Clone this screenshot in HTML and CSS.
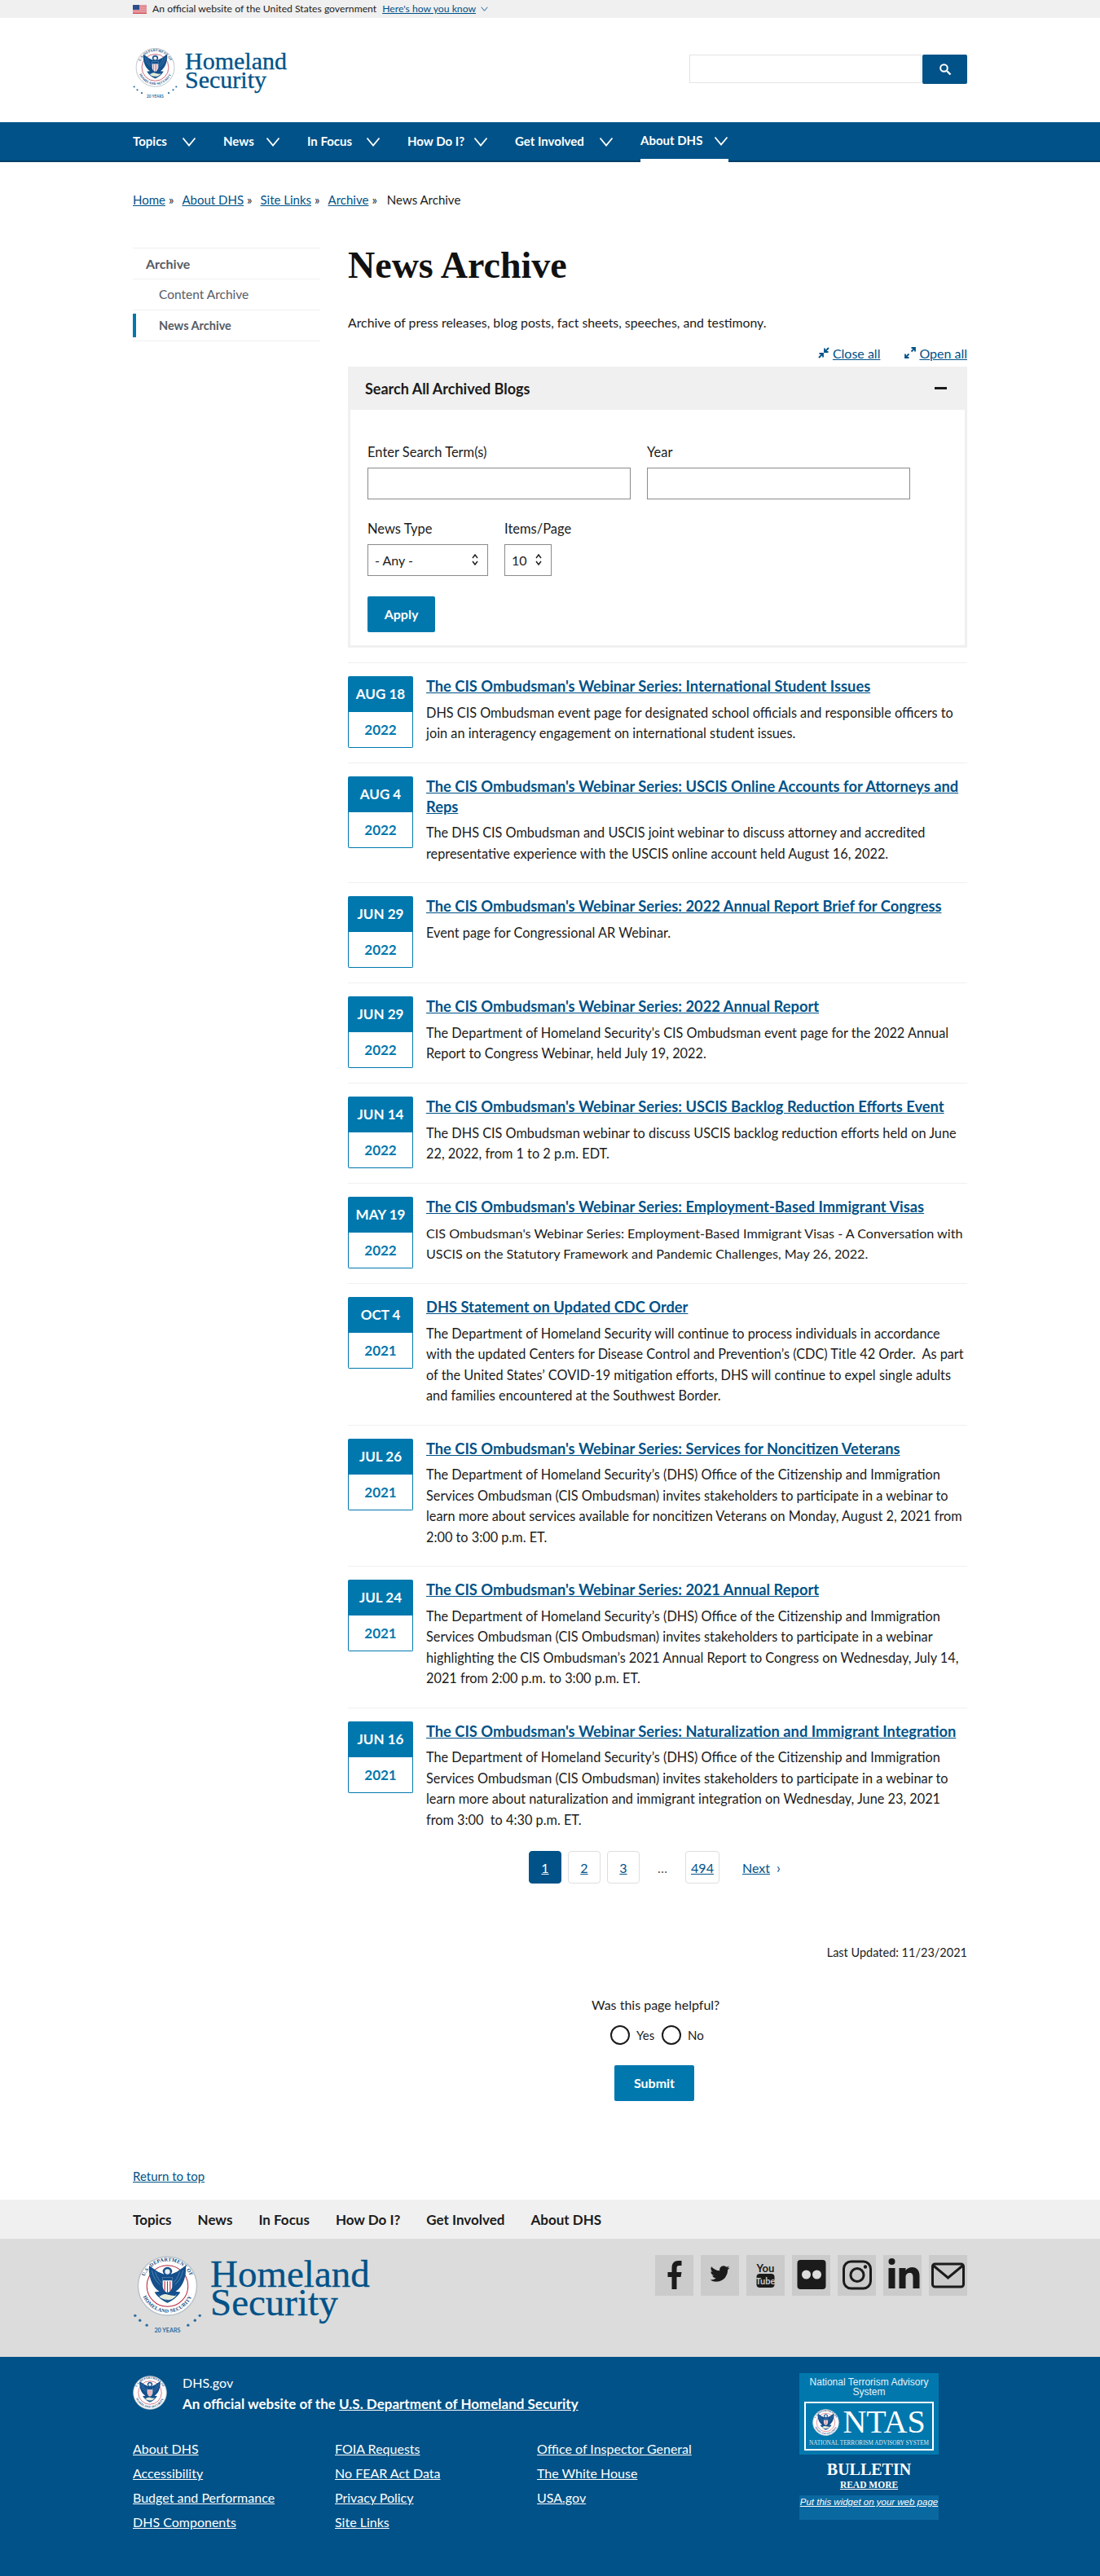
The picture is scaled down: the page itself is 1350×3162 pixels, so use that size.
FILE: index.html
```html
<!DOCTYPE html>
<html lang="en">
<head>
<meta charset="utf-8">
<title>News Archive | Homeland Security</title>
<link rel="stylesheet" href="styles.css">
</head>
<body>
<svg class="defs" width="0" height="0" aria-hidden="true">
  <defs>
    <path id="ring-top" d="M9 50a41 41 0 0 1 82 0"/>
    <path id="ring-bottom" d="M6 50a44 44 0 0 0 88 0"/>
    <symbol id="seal" viewBox="0 0 100 100">
      <circle cx="50" cy="50" r="48.5" fill="#fff" stroke="#b9c2c9" stroke-width="2"/>
      <text class="seal-ring"><textPath href="#ring-top" startOffset="50%" text-anchor="middle">U.S. DEPARTMENT OF</textPath></text>
      <text class="seal-ring"><textPath href="#ring-bottom" startOffset="50%" text-anchor="middle">HOMELAND SECURITY</textPath></text>
      <circle cx="50" cy="50" r="34" fill="#fff" stroke="#b5253d" stroke-width="1.4"/>
      <g transform="translate(50 50) scale(1.12) translate(-50 -50)">
        <path d="M50 22c-4 0-7 3-7 7l2 4-9-4-13-9c-1 13 2 26 11 35l4 3-7 1c4 7 12 13 19 16 7-3 15-9 19-16l-7-1 4-3c9-9 12-22 11-35l-13 9-9 4 2-4c0-4-3-7-7-7z" fill="#14508c"/>
        <path d="M27 27c2 9 6 16 12 21M32 29c2 7 5 12 9 16M73 27c-2 9-6 16-12 21M68 29c-2 7-5 12-9 16M36 62c5 5 9 8 14 10 5-2 9-5 14-10" fill="none" stroke="#5a8dbb" stroke-width="1"/>
        <circle cx="50" cy="29" r="3.800" fill="#e8eef3"/>
        <path d="M43 37h14v13c0 5-3 8-7 10-4-2-7-5-7-10z" fill="#fff"/>
        <path d="M43 37h14v5H43z" fill="#14508c"/>
        <path d="M46 43v14M50 43v17M54 43v14" stroke="#b5253d" stroke-width="1.300"/>
        <path d="M38 66c5-4 9-5 13-3 4 1 8 2 12 1-4 5-9 7-14 6-4 0-8-1-11-4z" fill="#e6ecd9"/>
      </g>
    </symbol>
    <symbol id="seal-years" viewBox="0 0 100 116">
      <use href="#seal" x="6" y="1" width="88" height="88"/>
      <g fill="#2c6ea0">
        <circle cx="3" cy="88" r="2"/><circle cx="97" cy="88" r="2"/>
        <circle cx="10" cy="95" r="2"/><circle cx="90" cy="95" r="2"/>
        <circle cx="20" cy="102" r="2"/><circle cx="80" cy="102" r="2"/>
      </g>
      <text class="seal-years" x="50" y="112" text-anchor="middle">20 YEARS</text>
    </symbol>
    <symbol id="chev" viewBox="0 0 18 12">
      <path d="M1.5 1.5 9 10.5l7.500-9" fill="none" stroke="currentColor" stroke-width="1.800"/>
    </symbol>
    <symbol id="updown" viewBox="0 0 10 16">
      <path d="M2 6l3-4 3 4M2 10l3 4 3-4" fill="none" stroke="#1b1b1b" stroke-width="1.400"/>
    </symbol>
  </defs>
</svg>

<div class="gov">
  <div class="wrap gov-in">
    <svg class="flag" viewBox="0 0 17 11"><rect width="17" height="11" fill="#fff"/><path d="M0 .8h17M0 2.500h17M0 4.200h17M0 5.900h17M0 7.600h17M0 9.300h17M0 10.600h17" stroke="#c8323e" stroke-width=".9"/><rect width="8" height="6" fill="#2d4f8b"/></svg>
    <span>An official website of the United States government</span>
    <a href="#" class="gov-link">Here's how you know</a>
    <svg class="gov-chev" width="9" height="6"><use href="#chev"/></svg>
  </div>
</div>

<header class="wrap head">
  <a href="#" class="logo logo-s">
    <svg class="logo-seal"><use href="#seal-years"/></svg>
    <span class="logo-text">Homeland<br>Security</span>
  </a>
  <form class="search">
    <input class="search-in" type="text" aria-label="Search">
    <button class="search-btn" type="button" aria-label="Search">
      <svg width="16" height="16" viewBox="0 0 16 16"><circle cx="6.500" cy="6.500" r="4.300" fill="none" stroke="#fff" stroke-width="2"/><path d="M10 10l4.500 4.500" stroke="#fff" stroke-width="2.400"/></svg>
    </button>
  </form>
</header>

<nav class="nav">
  <ul class="wrap nav-list">
    <li class="nav-i nav-topics"><a href="#">Topics</a><svg class="nav-chev"><use href="#chev"/></svg></li>
    <li class="nav-i nav-news"><a href="#">News</a><svg class="nav-chev"><use href="#chev"/></svg></li>
    <li class="nav-i nav-focus"><a href="#">In Focus</a><svg class="nav-chev"><use href="#chev"/></svg></li>
    <li class="nav-i nav-how"><a href="#">How Do I?</a><svg class="nav-chev"><use href="#chev"/></svg></li>
    <li class="nav-i nav-inv"><a href="#">Get Involved</a><svg class="nav-chev"><use href="#chev"/></svg></li>
    <li class="nav-i nav-about is-active"><a href="#">About DHS</a><svg class="nav-chev"><use href="#chev"/></svg></li>
  </ul>
</nav>

<div class="wrap crumbs">
  <a href="#">Home</a><span class="sep">»</span>
  <a href="#">About DHS</a><span class="sep">»</span>
  <a href="#">Site Links</a><span class="sep">»</span>
  <a href="#">Archive</a><span class="sep">»</span>
  <span class="crumb-now">News Archive</span>
</div>

<div class="wrap layout">
  <aside class="side">
    <a href="#" class="side-h">Archive</a>
    <a href="#" class="side-l">Content Archive</a>
    <a href="#" class="side-l is-cur">News Archive</a>
  </aside>
  <main class="main">
    <h1 class="title">News Archive</h1>
    <p class="desc">Archive of press releases, blog posts, fact sheets, speeches, and testimony.</p>
    <div class="toggles">
      <svg class="tog-i" viewBox="0 0 14 14"><path d="M13 1 8.500 5.500M8 1.500V6h4.500M1 13l4.500-4.500M6 12.500V8H1.500" fill="none" stroke="#005288" stroke-width="1.800"/></svg><a href="#">Close all</a>
      <svg class="tog-i tog-open" viewBox="0 0 14 14"><path d="M8.500 5.500 13 1M8.500 1H13v4.500M5.500 8.500 1 13M5.500 13H1V8.500" fill="none" stroke="#005288" stroke-width="1.800"/></svg><a href="#">Open all</a>
    </div>
    <section class="acc">
      <div class="acc-h"><h2>Search All Archived Blogs</h2><span class="acc-minus"></span></div>
      <form class="acc-b">
        <div class="row">
          <label class="fld"><span class="lbl">Enter Search Term(s)</span><input class="inp" type="text"></label>
          <label class="fld"><span class="lbl">Year</span><input class="inp" type="text"></label>
        </div>
        <div class="row row-sel">
          <label class="fld-s"><span class="lbl">News Type</span>
            <span class="sel sel-type">- Any -<svg class="sel-i"><use href="#updown"/></svg></span></label>
          <label class="fld-s"><span class="lbl">Items/Page</span>
            <span class="sel sel-num">10<svg class="sel-i"><use href="#updown"/></svg></span></label>
        </div>
        <button class="btn btn-apply" type="button">Apply</button>
      </form>
    </section>

    <ul class="news">
      <li class="item">
        <div class="date"><div class="d-top">AUG 18</div><div class="d-bot">2022</div></div>
        <div class="txt"><h3><a href="#">The CIS Ombudsman's Webinar Series: International Student Issues</a></h3>
        <p>DHS CIS Ombudsman event page for designated school officials and responsible officers to join an interagency engagement on international student issues.</p></div>
      </li>
      <li class="item">
        <div class="date"><div class="d-top">AUG 4</div><div class="d-bot">2022</div></div>
        <div class="txt"><h3><a href="#">The CIS Ombudsman's Webinar Series: USCIS Online Accounts for Attorneys and Reps</a></h3>
        <p>The DHS CIS Ombudsman and USCIS joint webinar to discuss attorney and accredited representative experience with the USCIS online account held August 16, 2022.</p></div>
      </li>
      <li class="item">
        <div class="date"><div class="d-top">JUN 29</div><div class="d-bot">2022</div></div>
        <div class="txt"><h3><a href="#">The CIS Ombudsman's Webinar Series: 2022 Annual Report Brief for Congress</a></h3>
        <p>Event page for Congressional AR Webinar.</p></div>
      </li>
      <li class="item">
        <div class="date"><div class="d-top">JUN 29</div><div class="d-bot">2022</div></div>
        <div class="txt"><h3><a href="#">The CIS Ombudsman's Webinar Series: 2022 Annual Report</a></h3>
        <p>The Department of Homeland Security's CIS Ombudsman event page for the 2022 Annual Report to Congress Webinar, held July 19, 2022.</p></div>
      </li>
      <li class="item">
        <div class="date"><div class="d-top">JUN 14</div><div class="d-bot">2022</div></div>
        <div class="txt"><h3><a href="#">The CIS Ombudsman's Webinar Series: USCIS Backlog Reduction Efforts Event</a></h3>
        <p>The DHS CIS Ombudsman webinar to discuss USCIS backlog reduction efforts held on June 22, 2022, from 1 to 2 p.m. EDT.</p></div>
      </li>
      <li class="item">
        <div class="date"><div class="d-top">MAY 19</div><div class="d-bot">2022</div></div>
        <div class="txt"><h3><a href="#">The CIS Ombudsman's Webinar Series: Employment-Based Immigrant Visas</a></h3>
        <p class="tight">CIS Ombudsman's Webinar Series: Employment-Based Immigrant Visas - A Conversation with USCIS on the Statutory Framework and Pandemic Challenges, May 26, 2022.</p></div>
      </li>
      <li class="item">
        <div class="date"><div class="d-top">OCT 4</div><div class="d-bot">2021</div></div>
        <div class="txt"><h3><a href="#">DHS Statement on Updated CDC Order</a></h3>
        <p>The Department of Homeland Security will continue to process individuals in accordance with the updated Centers for Disease Control and Prevention’s (CDC) Title 42 Order.&nbsp; As part of the United States’ COVID-19 mitigation efforts, DHS will continue to expel single adults and families encountered at the Southwest Border.</p></div>
      </li>
      <li class="item">
        <div class="date"><div class="d-top">JUL 26</div><div class="d-bot">2021</div></div>
        <div class="txt"><h3><a href="#">The CIS Ombudsman's Webinar Series: Services for Noncitizen Veterans</a></h3>
        <p>The Department of Homeland Security’s (DHS) Office of the Citizenship and Immigration Services Ombudsman (CIS Ombudsman) invites stakeholders to participate in a webinar to learn more about services available for noncitizen Veterans on Monday, August 2, 2021 from 2:00 to 3:00 p.m. ET.</p></div>
      </li>
      <li class="item">
        <div class="date"><div class="d-top">JUL 24</div><div class="d-bot">2021</div></div>
        <div class="txt"><h3><a href="#">The CIS Ombudsman's Webinar Series: 2021 Annual Report</a></h3>
        <p>The Department of Homeland Security’s (DHS) Office of the Citizenship and Immigration Services Ombudsman (CIS Ombudsman) invites stakeholders to participate in a webinar highlighting the CIS Ombudsman’s 2021 Annual Report to Congress on Wednesday, July 14, 2021 from 2:00 p.m. to 3:00 p.m. ET.</p></div>
      </li>
      <li class="item item-last">
        <div class="date"><div class="d-top">JUN 16</div><div class="d-bot">2021</div></div>
        <div class="txt"><h3><a href="#">The CIS Ombudsman's Webinar Series: Naturalization and Immigrant Integration</a></h3>
        <p>The Department of Homeland Security’s (DHS) Office of the Citizenship and Immigration Services Ombudsman (CIS Ombudsman) invites stakeholders to participate in a webinar to learn more about naturalization and immigrant integration on Wednesday, June 23, 2021 from 3:00&nbsp; to 4:30 p.m. ET.</p></div>
      </li>
    </ul>

    <nav class="pager">
      <a href="#" class="pg is-on">1</a>
      <a href="#" class="pg">2</a>
      <a href="#" class="pg">3</a>
      <span class="pg-dots">…</span>
      <a href="#" class="pg pg-wide">494</a>
      <a href="#" class="pg-next">Next</a><span class="pg-arrow">›</span>
    </nav>

    <p class="updated">Last Updated: 11/23/2021</p>

    <form class="fb">
      <p class="fb-q">Was this page helpful?</p>
      <div class="fb-opts">
        <span class="radio"></span><span class="fb-l">Yes</span>
        <span class="radio"></span><span class="fb-l">No</span>
      </div>
      <button class="btn btn-submit" type="button">Submit</button>
    </form>
  </main>
</div>

<div class="wrap back"><a href="#">Return to top</a></div>

<footer>
  <div class="f-nav">
    <ul class="wrap f-nav-list">
      <li><a href="#">Topics</a></li>
      <li><a href="#">News</a></li>
      <li><a href="#">In Focus</a></li>
      <li><a href="#">How Do I?</a></li>
      <li><a href="#">Get Involved</a></li>
      <li><a href="#">About DHS</a></li>
    </ul>
  </div>
  <div class="f-mid">
    <div class="wrap f-mid-in">
      <a href="#" class="logo logo-l">
        <svg class="logo-seal"><use href="#seal-years"/></svg>
        <span class="logo-text">Homeland<br>Security</span>
      </a>
      <div class="social">
        <a href="#" class="soc" aria-label="Facebook"><svg viewBox="0 0 46 50"><path d="M20 42V27h-5v-6h5v-5c0-6 3-9 8-9h4v6h-3c-2 0-3 1-3 3v5h6l-1 6h-5v15z" fill="#1b1b1b"/></svg></a>
        <a href="#" class="soc" aria-label="Twitter"><svg viewBox="-11 -11 46 50"><path d="M23.953 4.570a10 10 0 01-2.825.775 4.958 4.958 0 002.163-2.723c-.951.555-2.005.959-3.127 1.184a4.920 4.920 0 00-8.384 4.482C7.690 8.095 4.067 6.130 1.640 3.162a4.822 4.822 0 00-.666 2.475c0 1.710.870 3.213 2.188 4.096a4.904 4.904 0 01-2.228-.616v.060a4.923 4.923 0 003.946 4.827 4.996 4.996 0 01-2.212.085 4.936 4.936 0 004.604 3.417 9.867 9.867 0 01-6.102 2.105c-.390 0-.779-.023-1.170-.067a13.995 13.995 0 007.557 2.209c9.053 0 13.998-7.496 13.998-13.985 0-.210 0-.420-.015-.630A9.935 9.935 0 0024 4.590z" fill="#1b1b1b"/></svg></a>
        <a href="#" class="soc" aria-label="YouTube"><svg viewBox="0 0 46 50"><text class="yt-you" x="23" y="21" text-anchor="middle">You</text><rect x="12" y="23" width="22" height="17" rx="4" fill="#1b1b1b"/><text class="yt-tube" x="23" y="36" text-anchor="middle">Tube</text></svg></a>
        <a href="#" class="soc" aria-label="Flickr"><svg viewBox="0 0 46 50"><rect x="6" y="6" width="35" height="36" rx="4" fill="#1b1b1b"/><circle cx="17" cy="24" r="5.500" fill="#ddd"/><circle cx="30" cy="24" r="5.500" fill="#ddd"/></svg></a>
        <a href="#" class="soc" aria-label="Instagram"><svg viewBox="0 0 46 50"><rect x="7" y="8" width="33" height="33" rx="9" fill="none" stroke="#1b1b1b" stroke-width="3"/><circle cx="23.500" cy="24.500" r="8" fill="none" stroke="#1b1b1b" stroke-width="3"/><circle cx="33.500" cy="14.500" r="2.200" fill="#1b1b1b"/></svg></a>
        <a href="#" class="soc" aria-label="LinkedIn"><svg viewBox="0 0 46 50"><circle cx="10" cy="8" r="4" fill="#1b1b1b"/><path d="M6 16h8v25H6zM19 16h8v3c2-3 5-4 8-4 6 0 9 4 9 11v15h-8V27c0-3-1-5-4-5s-5 2-5 5v14h-8z" fill="#1b1b1b"/></svg></a>
        <a href="#" class="soc" aria-label="Email"><svg viewBox="0 0 46 50"><rect x="4" y="11" width="38" height="28" rx="3" fill="none" stroke="#1b1b1b" stroke-width="3"/><path d="M5 13l18 15 18-15" fill="none" stroke="#1b1b1b" stroke-width="3"/></svg></a>
      </div>
    </div>
  </div>
  <div class="f-blue">
    <div class="wrap f-blue-in">
      <div class="f-left">
        <div class="f-id">
          <svg class="f-seal"><use href="#seal"/></svg>
          <div class="f-id-t">
            <p class="f-gov">DHS.gov</p>
            <p class="f-off">An official website of the <a href="#">U.S. Department of Homeland Security</a></p>
          </div>
        </div>
        <div class="f-links">
          <ul>
            <li><a href="#">About DHS</a></li>
            <li><a href="#">Accessibility</a></li>
            <li><a href="#">Budget and Performance</a></li>
            <li><a href="#">DHS Components</a></li>
          </ul>
          <ul>
            <li><a href="#">FOIA Requests</a></li>
            <li><a href="#">No FEAR Act Data</a></li>
            <li><a href="#">Privacy Policy</a></li>
            <li><a href="#">Site Links</a></li>
          </ul>
          <ul>
            <li><a href="#">Office of Inspector General</a></li>
            <li><a href="#">The White House</a></li>
            <li><a href="#">USA.gov</a></li>
          </ul>
        </div>
      </div>
      <div class="ntas">
        <div class="ntas-top">
          <p class="ntas-t">National Terrorism Advisory System</p>
          <div class="ntas-frame">
            <div class="ntas-main"><svg class="ntas-seal"><use href="#seal"/></svg><span class="ntas-word">NTAS</span></div>
            <div class="ntas-sub">NATIONAL TERRORISM ADVISORY SYSTEM</div>
          </div>
        </div>
        <div class="ntas-bul">BULLETIN</div>
        <a href="#" class="ntas-more">READ MORE</a>
        <div class="ntas-bar"><a href="#">Put this widget on your web page</a></div>
      </div>
    </div>
  </div>
</footer>
</body>
</html>
```

FILE: styles.css
```css
* { box-sizing: border-box; }
html, body { margin: 0; padding: 0; }
body {
  font-family: "Lato", "Noto Sans", sans-serif;
  font-size: 16px;
  line-height: 25px;
  color: #1b1b1b;
  background: #fff;
}
a { color: #005288; }
ul { list-style: none; margin: 0; padding: 0; }
p, h1, h2, h3 { margin: 0; }
.defs { position: absolute; }
.wrap { width: 1024px; margin-left: auto; margin-right: auto; }

.seal-ring { font: bold 8.500px "Liberation Serif", serif; fill: #12477c; letter-spacing: .3px; }
.seal-years { font: bold 8.500px "Lato", sans-serif; fill: #2c6ea0; }

/* gov banner */
.gov { background: #f0f0f0; height: 22px; }
.gov-in { display: flex; align-items: center; height: 22px; font-size: 12.200px; line-height: 22px; }
.flag { width: 17px; height: 11px; margin-right: 7px; }
.gov-link { margin-left: 7px; }
.gov-chev { margin-left: 6px; color: #005288; }

/* header */
.head { height: 128px; display: flex; justify-content: space-between; }
.logo { display: flex; text-decoration: none; color: #005288; }
.logo-text { font-family: "Liberation Serif", serif; color: #005288; -webkit-text-stroke: .3px #005288; }
.logo-s { margin-top: 36px; height: 65px; }
.logo-s .logo-seal { width: 55px; height: 64px; margin-right: 9px; }
.logo-s .logo-text { font-size: 30px; line-height: 23px; padding-top: 5px; }
.search { display: flex; margin-top: 45px; height: 36px; }
.search-in { width: 285px; height: 35px; border: 1px solid #e4e4e4; background: #fff; }
.search-btn { width: 55px; height: 36px; margin: 0 0 0 1px; padding: 0; border: 0; border-radius: 2px; background: #005288; display: flex; align-items: center; justify-content: center; }

/* main nav */
.nav { height: 49px; background: #005288; border-bottom: 2px solid #003e66; }
.nav-list { display: flex; height: 49px; }
.nav-i { display: flex; align-items: center; height: 49px; padding-bottom: 2px; color: #fff; font-weight: 700; font-size: 15px; }
.nav-i a { color: #fff; text-decoration: none; }
.nav-chev { width: 18px; height: 12px; margin-left: auto; }
.nav-topics { width: 111px; padding-right: 33px; }
.nav-news { width: 103px; padding-right: 33px; }
.nav-focus { width: 123px; padding-right: 33px; }
.nav-how { width: 132px; padding-right: 33px; }
.nav-inv { width: 154px; padding-right: 33px; }
.nav-about { width: 108px; border-bottom: 4px solid #fff; padding-bottom: 0; }

/* breadcrumb */
.crumbs { margin-top: 34px; display: flex; height: 24px; line-height: 24px; font-size: 15px; }
.sep { margin: 0 10px 0 4px; }
.crumb-now { margin-left: 2px; }

/* layout */
.layout { display: flex; gap: 34px; margin-top: 47px; }
.side { width: 230px; flex: none; display: flex; flex-direction: column; border-top: 1px solid #f0f0f0; height: 116px; color: #565c65; }
.side-h { display: flex; align-items: center; height: 38px; padding-left: 16px; font-weight: 700; font-size: 16px; color: #565c65; text-decoration: none; border-bottom: 1px solid #f0f0f0; }
.side-l { display: flex; align-items: center; height: 38px; padding-left: 32px; font-size: 15.500px; color: #565c65; text-decoration: none; border-bottom: 1px solid #f0f0f0; }
.side-l.is-cur { font-weight: 700; font-size: 14.500px; position: relative; }
.side-l.is-cur::before { content: ""; position: absolute; left: 0; top: 4px; bottom: 4px; width: 4px; background: #0078ae; }
.main { width: 760px; flex: none; }

.title { font-family: "Liberation Serif", serif; font-size: 46px; line-height: 44px; font-weight: 700; color: #111; }
.desc { margin-top: 35px; font-size: 15.800px; }
.toggles { display: flex; justify-content: flex-end; align-items: center; margin-top: 13px; height: 24px; font-size: 16px; }
.tog-i { width: 14px; height: 14px; margin-right: 4px; }
.tog-open { margin-left: 30px; }

/* accordion */
.acc { margin-top: 5px; border: 3px solid #f0f0f0; border-top: 0; height: 345px; }
.acc-h { margin: 0 -3px; height: 53px; background: #f0f0f0; display: flex; align-items: center; justify-content: space-between; padding: 0 25px 0 21px; }
.acc-h h2 { font-size: 18px; line-height: 24px; font-weight: 700; }
.acc-minus { width: 15px; height: 3px; background: #1b1b1b; }
.acc-b { padding: 40px 21px 0; }
.row { display: flex; gap: 20px; }
.row-sel { margin-top: 24px; }
.fld { width: 323px; display: block; }
.fld-s { display: block; }
.lbl { display: block; height: 31px; line-height: 24px; font-size: 16.500px; }
.inp { display: block; width: 323px; height: 39px; border: 1px solid #8b8b8b; padding: 0; background: #fff; }
.sel { display: flex; align-items: center; height: 39px; border: 1px solid #8b8b8b; padding-left: 8px; font-size: 16px; position: relative; }
.sel-type { width: 148px; }
.sel-num { width: 58px; }
.sel-i { position: absolute; right: 10px; top: 10px; width: 10px; height: 16px; }
.btn { display: block; border: 0; border-radius: 2px; background: #0078ae; color: #fff; font: 700 16px/24px "Lato", sans-serif; padding: 0; }
.btn-apply { width: 83px; height: 44px; margin-top: 25px; }

/* news list */
.news { margin-top: 18px; }
.item { display: flex; gap: 16px; padding: 16px 0 18px; border-top: 1px solid #f0f0f0; }
.item-last { padding-bottom: 21px; }
.date { width: 80px; flex: none; height: 88px; text-align: center; font-weight: 700; font-size: 17px; }
.d-top { height: 44px; line-height: 44px; background: #0078ae; color: #fff; border-radius: 2px 2px 0 0; }
.d-bot { height: 44px; line-height: 44px; color: #0078ae; border: 1px solid #0078ae; border-top: 0; border-radius: 0 0 2px 2px; }
.txt { flex: 1; padding-bottom: 5px; }
.txt h3 { font-size: 18.300px; line-height: 24.500px; font-weight: 700; }
.txt p { margin-top: 7px; font-size: 16.300px; line-height: 25.500px; }
.txt p.tight { font-size: 16.150px; }

/* pager */
.pager { display: flex; align-items: center; margin-left: 222px; height: 40px; }
.pg { width: 40px; height: 40px; margin-right: 8px; display: flex; align-items: center; justify-content: center; border: 1px solid #dcdee0; border-radius: 4px; font-size: 16px; }
.pg.is-on { background: #005288; border-color: #005288; color: #fff; }
.pg-wide { width: 42px; margin-right: 28px; }
.pg-dots { width: 48px; text-align: center; margin-right: 0; padding-right: 8px; color: #555; }
.pg-next { font-size: 16px; }
.pg-arrow { margin-left: 8px; color: #005288; font-size: 17px; }

.updated { margin-top: 73px; text-align: right; font-size: 14.500px; line-height: 24px; }

/* feedback */
.fb { margin-top: 40px; margin-left: 299px; width: 160px; }
.fb-q { font-size: 16px; line-height: 24px; }
.fb-opts { display: flex; align-items: center; margin: 13px 0 0 23px; height: 24px; }
.radio { width: 24px; height: 24px; border: 2px solid #1b1b1b; border-radius: 50%; flex: none; }
.fb-l { width: 39px; padding-left: 8px; font-size: 15px; }
.btn-submit { width: 98px; height: 44px; margin: 25px 0 0 28px; }

.back { margin-top: 80px; height: 41px; font-size: 15px; line-height: 24px; }

/* footer */
.f-nav { background: #f0f0f0; height: 48px; }
.f-nav-list { display: flex; gap: 32px; height: 48px; align-items: center; font-weight: 700; font-size: 17px; }
.f-nav-list a { color: #1b1b1b; text-decoration: none; }
.f-mid { background: #dcdcdc; height: 145px; }
.f-mid-in { display: flex; justify-content: space-between; padding-top: 20px; }
.logo-l .logo-seal { width: 85px; height: 98px; margin-right: 10px; }
.logo-l .logo-text { font-size: 47px; line-height: 35px; padding-top: 6px; }
.social { display: flex; gap: 9px; }
.soc { width: 47px; height: 50px; background: #cbcbcb; display: block; }
.soc svg { width: 47px; height: 50px; display: block; }
.yt-you { font: 700 13px "Liberation Sans Narrow", "Lato", sans-serif; fill: #1b1b1b; }
.yt-tube { font: 700 11px "Lato", sans-serif; fill: #cbcbcb; }

.f-blue { background: #005288; height: 269px; color: #fff; }
.f-blue a { color: #fff; }
.f-blue-in { display: flex; justify-content: space-between; padding: 20px 35px 0 0; }
.f-id { display: flex; padding-top: 3px; }
.f-seal { width: 42px; height: 42px; margin-right: 19px; }
.f-gov { font-size: 16px; line-height: 24px; margin-top: -3px; }
.f-off { font-weight: 700; font-size: 17px; line-height: 24px; margin-top: 2px; }
.f-links { display: grid; grid-template-columns: repeat(3, 248px); margin-top: 28px; }
.f-links li { height: 30px; line-height: 30px; font-size: 16px; }

.ntas { width: 171px; text-align: center; font-family: "Liberation Serif", serif; }
.ntas-top { background: #0078ae; height: 100px; padding: 5px 6px 0; }
.ntas-t { font: 12px/12px "Liberation Sans", sans-serif; height: 30px; color: #e8f2f8; }
.ntas-frame { border: 2px solid #fff; height: 60px; }
.ntas-main { display: flex; align-items: center; justify-content: center; height: 42px; padding-top: 4px; }
.ntas-seal { width: 33px; height: 33px; margin-right: 4px; }
.ntas-word { font-size: 40px; line-height: 36px; }
.ntas-sub { font-size: 7.200px; line-height: 10px; margin-top: 2px; color: #dfe9f0; white-space: nowrap; }
.ntas-bul { margin-top: 6px; font-size: 20px; line-height: 24px; font-weight: 700; }
.ntas-more { display: block; font-size: 11.500px; line-height: 14px; margin-top: 0; font-weight: 700; }
.ntas-bar { margin-top: 6px; background: #0a68a0; height: 30px; white-space: nowrap; font: italic 11.500px/16px "Liberation Sans", sans-serif; }
```
